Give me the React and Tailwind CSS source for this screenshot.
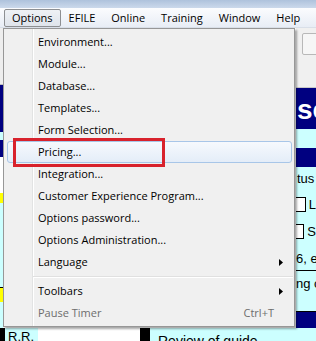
const menuBar = ["Options", "EFILE", "Online", "Training", "Window", "Help"];

const items = [
  { label: "Environment..." },
  { label: "Module..." },
  { label: "Database..." },
  { label: "Templates..." },
  { label: "Form Selection..." },
  { label: "Pricing...", hover: true },
  { label: "Integration..." },
  { label: "Customer Experience Program..." },
  { label: "Options password..." },
  { label: "Options Administration..." },
  { label: "Language", sub: true },
  { sep: true },
  { label: "Toolbars", sub: true },
  { label: "Pause Timer", disabled: true, shortcut: "Ctrl+T" },
];

function Arrow() {
  return (
    <svg width="4" height="7" viewBox="0 0 4 7" className="ml-auto mr-[8px]">
      <path d="M0 0 L4 3.5 L0 7 Z" fill="#000" />
    </svg>
  );
}

function MenuItem({ item }) {
  if (item.sep) {
    return (
      <div className="h-[7px] flex flex-col justify-center pl-[29px] pr-[1px]">
        <div className="h-[1px] bg-[#e0e0e0]" />
        <div className="h-[1px] bg-white" />
      </div>
    );
  }
  return (
    <div
      className={`h-[22px] ml-[3px] mr-[2px] flex items-center pl-[30px] rounded-[3px] border ${
        item.hover
          ? "border-[#a8c6e8] bg-[linear-gradient(#f6f9fd,#e4edf8)]"
          : "border-transparent"
      } ${item.disabled ? "text-[#6d6d6d]" : "text-black"}`}
    >
      <span>{item.label}</span>
      {item.sub && <Arrow />}
      {item.shortcut && <span className="ml-auto mr-[17px]">{item.shortcut}</span>}
    </div>
  );
}

export default function App() {
  return (
    <div className="relative w-[316px] h-[341px] overflow-hidden bg-white font-['Open_Sans',sans-serif] text-[11px]">
      <div className="h-[8px] bg-[linear-gradient(#aec2dc,#cbd9eb)]" />

      <div className="h-[20px] flex items-start pl-[4px] bg-[linear-gradient(#fbfcfe,#e8edf5)] border-b border-[#d9dfe8]">
        {menuBar.map((m, i) => (
          <div
            key={m}
            className={`h-[18px] mt-[1px] px-[7px] flex items-center rounded-[2px] border ${
              i === 0 ? "border-[#8d8f92] bg-[linear-gradient(#eef1f5,#dfe4eb)]" : "border-transparent"
            }`}
          >
            {m}
          </div>
        ))}
      </div>

      <div className="flex h-[300px] font-['Liberation_Sans',sans-serif] text-[13px]">
        <div className="w-[3px] flex flex-col">
          <div className="h-[57px] bg-[#eeeeee] border-b border-[#bdbdbd]" />
          <div className="h-[47px] bg-[#000080]" />
          <div className="h-[8px] bg-[#ccffff]" />
          <div className="h-[17px] bg-[#000080]" />
          <div className="h-[36px] bg-white" />
          <div className="h-[10px] bg-[#ffff00]" />
          <div className="h-[85px] bg-[#ccffff] border-b border-black" />
          <div className="h-[14px] bg-[#ffff00]" />
          <div className="flex-1 bg-[#ccffff]" />
        </div>
        <div className="flex-1 bg-white" />
        <div className="w-[20px] flex flex-col overflow-hidden whitespace-nowrap">
          <div className="h-[62px] bg-[#f0f0f0] border-b border-[#c8c8c8] pt-[5px] pl-[6px]">
            <div className="w-[20px] h-[22px] rounded-[2px] border border-[#b8b8b8] bg-[#f6f6f6]" />
          </div>
          <div className="h-[41px] bg-[#000080] text-white font-bold text-[28px] leading-[44px] pl-[1px]">
            sc
          </div>
          <div className="h-[19px] bg-[#ccffff]" />
          <div className="h-[20px] bg-[#000080]" />
          <div className="flex-1 bg-[#ccffff] flex flex-col text-black">
            <div className="h-[24px] flex items-center pl-[1px]">tus</div>
            <div className="h-[27px] flex items-center gap-[3px]">
              <div className="w-[12px] h-[15px] border border-black bg-white -ml-[1px]" />
              <span>L</span>
            </div>
            <div className="h-[27px] flex items-center gap-[3px]">
              <div className="w-[12px] h-[15px] border border-black bg-white -ml-[1px]" />
              <span>S</span>
            </div>
            <div className="h-[26px] flex items-center border-b border-black pt-[2px]">6, e</div>
            <div className="h-[26px] flex items-center">ng c</div>
            <div className="h-[15px] border-b border-black" />
            <div className="h-[16px] bg-[#000080]" />
          </div>
        </div>
      </div>

      <div className="flex h-[13px] font-['Liberation_Sans',sans-serif] text-[13px] leading-[16px]">
        <div className="w-[5px] bg-black" />
        <div className="w-[33px] bg-[#ccffff] pl-[3px] pt-[1px]">R.R.</div>
        <div className="w-[102px] bg-white" />
        <div className="w-[10px] bg-black" />
        <div className="flex-1 bg-[#ccffff] pl-[8px] pt-[5px] text-[14px] whitespace-nowrap">Review of guide</div>
      </div>

      <div className="absolute left-[3px] top-[28px] w-[292px] h-[299px] border border-[#979797] shadow-[2px_2px_2px_rgba(0,0,0,0.35)] pt-[2px] bg-[linear-gradient(to_right,#f0f0f0_28px,#e2e3e3_28px,#e2e3e3_29px,#ffffff_29px,#ffffff_30px,#f0f0f0_30px)]">
        {items.map((item, i) => (
          <MenuItem key={i} item={item} />
        ))}
      </div>

      <div className="absolute left-[13px] top-[138px] w-[152px] h-[29px] border-[3px] border-[#d8222c]" />
    </div>
  );
}
